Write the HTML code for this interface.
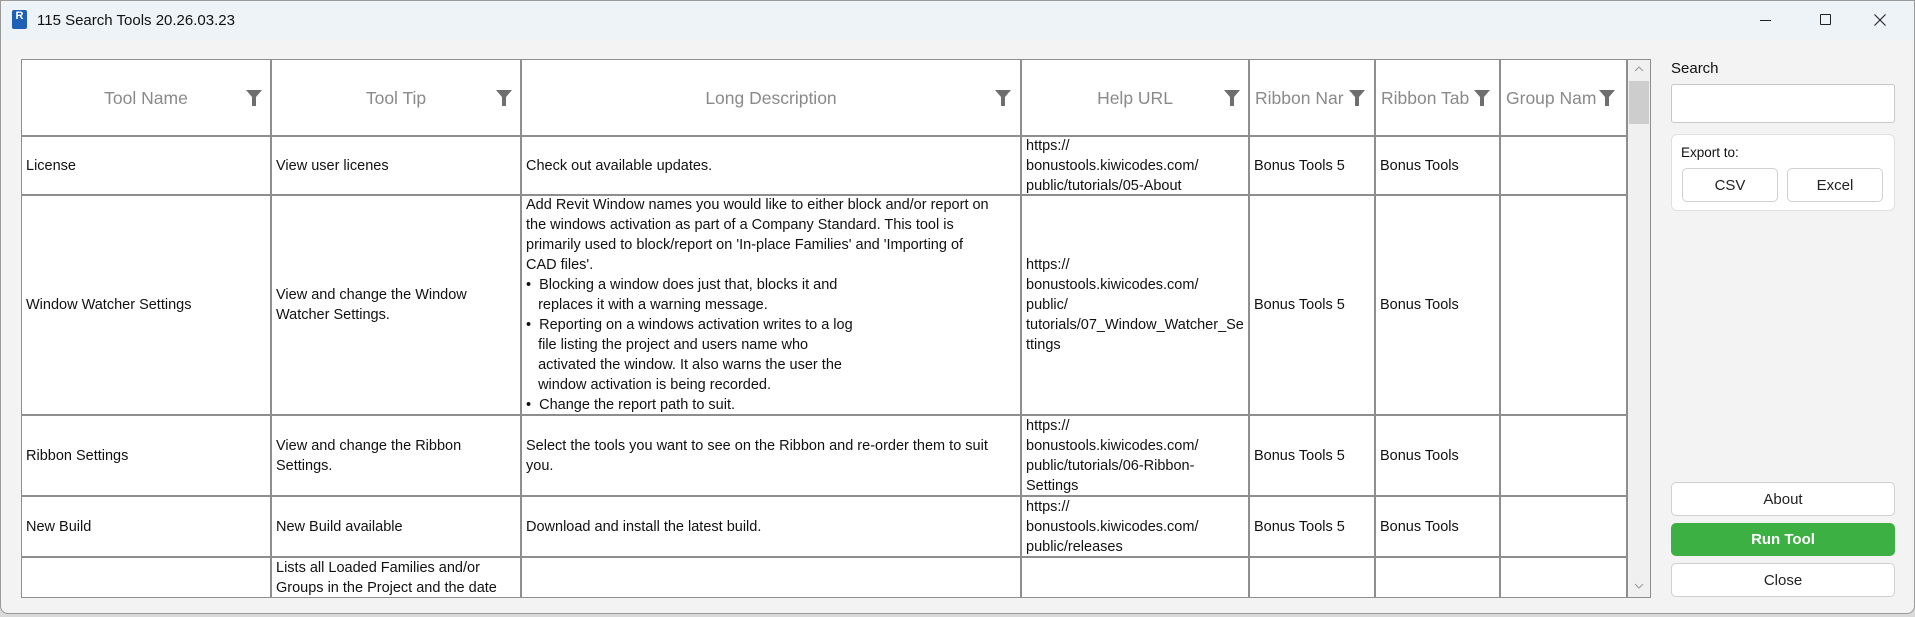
<!DOCTYPE html>
<html><head><meta charset="utf-8"><style>
*{box-sizing:border-box;margin:0;padding:0}
body{width:1915px;height:617px;overflow:hidden;background:#d9d9d9;font-family:"Liberation Sans",sans-serif;position:relative}
.win{position:absolute;left:0;top:0;width:1915px;height:614px;background:#f3f3f3;border:1px solid #9a9a9a;border-radius:0 0 8px 8px}
.title{position:absolute;left:0;top:0;width:100%;height:39px;background:#eef3f8}
.t{position:absolute;font-size:14.5px;color:#111;line-height:20px;white-space:nowrap}
.c{position:absolute;background:#fff;border-right:2px solid #8e8e8e;border-bottom:2px solid #8e8e8e;display:flex;align-items:center;padding-left:4px;font-size:14.5px;line-height:20px;color:#111;white-space:nowrap;overflow:hidden}
.h{justify-content:center;color:#8a8a8a;font-size:17.5px;padding-left:0}
.f{position:absolute;width:18px;height:18px}
.btn{position:absolute;background:#fff;border:1px solid #d0d0d0;border-radius:5px;display:flex;align-items:center;justify-content:center;font-size:15px;color:#222}
</style></head><body>
<div class="win">
<div class="title">
 <div style="position:absolute;left:11px;top:9px;width:15px;height:19px;background:#1f5fb5;border-radius:2px;color:#fff;font-size:11px;font-weight:bold;text-align:center;line-height:13px">R</div>
 <div class="t" style="left:36px;top:10px;font-size:15px">115 Search Tools 20.26.03.23</div>
 <div style="position:absolute;left:1759px;top:19px;width:11px;height:1px;background:#222"></div>
 <div style="position:absolute;left:1819px;top:13px;width:11px;height:11px;border:1px solid #222;border-radius:1px"></div>
 <svg style="position:absolute;left:1873px;top:13px" width="12" height="12" viewBox="0 0 12 12"><path d="M0.5 0.5L11.5 11.5M11.5 0.5L0.5 11.5" stroke="#222" stroke-width="1.1"/></svg>
</div>
<div style="position:absolute;left:20px;top:58px;width:1630px;height:539px;border:1px solid #8e8e8e;background:#fff"></div>
<div id="tbl"></div>
<div style="position:absolute;left:1627px;top:59px;width:22px;height:537px;background:#f0f0f0"></div>
<div style="position:absolute;left:1628px;top:80px;width:20px;height:43px;background:#cdcdcd"></div>
<svg style="position:absolute;left:1633px;top:65px" width="10" height="6" viewBox="0 0 10 6"><path d="M1 5L5 1L9 5" stroke="#999" fill="none"/></svg>
<svg style="position:absolute;left:1633px;top:582px" width="10" height="6" viewBox="0 0 10 6"><path d="M1 1L5 5L9 1" stroke="#999" fill="none"/></svg>

<div class="t" style="left:1670px;top:58px;font-size:15px">Search</div>
<div style="position:absolute;left:1670px;top:83px;width:224px;height:39px;background:#fff;border:1px solid #c8c8c8;border-radius:3px"></div>
<div style="position:absolute;left:1670px;top:133px;width:224px;height:77px;background:#fff;border:1px solid #e0e0e0;border-radius:6px"></div>
<div class="t" style="left:1680px;top:142px;font-size:13.5px">Export to:</div>
<div class="btn" style="left:1681px;top:167px;width:96px;height:34px">CSV</div>
<div class="btn" style="left:1786px;top:167px;width:96px;height:34px">Excel</div>
<div class="btn" style="left:1670px;top:481px;width:224px;height:34px">About</div>
<div class="btn" style="left:1670px;top:522px;width:224px;height:33px;background:#3cb043;border-color:#3cb043;color:#fff;font-weight:bold">Run Tool</div>
<div class="btn" style="left:1670px;top:562px;width:224px;height:34px">Close</div>
</div>
<script>
var X=[21,271,521,1021,1249,1375,1500,1627];
var Y=[59,136,195,415,496,557,596];
var H=["Tool Name","Tool Tip","Long Description","Help URL","Ribbon Nar","Ribbon Tab","Group Nam"];
var R=[
["License","View user licenes","Check out available updates.","https://<br>bonustools.kiwicodes.com/<br>public/tutorials/05-About","Bonus Tools 5","Bonus Tools",""],
["Window Watcher Settings","View and change the Window<br>Watcher Settings.","Add Revit Window names you would like to either block and/or report on<br>the windows activation as part of a Company Standard. This tool is<br>primarily used to block/report on 'In-place Families' and 'Importing of<br>CAD files'.<br>•&nbsp; Blocking a window does just that, blocks it and<br>&nbsp;&nbsp;&nbsp;replaces it with a warning message.<br>•&nbsp; Reporting on a windows activation writes to a log<br>&nbsp;&nbsp;&nbsp;file listing the project and users name who<br>&nbsp;&nbsp;&nbsp;activated the window. It also warns the user the<br>&nbsp;&nbsp;&nbsp;window activation is being recorded.<br>•&nbsp; Change the report path to suit.","https://<br>bonustools.kiwicodes.com/<br>public/<br>tutorials/07_Window_Watcher_Se<br>ttings","Bonus Tools 5","Bonus Tools",""],
["Ribbon Settings","View and change the Ribbon<br>Settings.","Select the tools you want to see on the Ribbon and re-order them to suit<br>you.","https://<br>bonustools.kiwicodes.com/<br>public/tutorials/06-Ribbon-<br>Settings","Bonus Tools 5","Bonus Tools",""],
["New Build","New Build available","Download and install the latest build.","https://<br>bonustools.kiwicodes.com/<br>public/releases","Bonus Tools 5","Bonus Tools",""],
["","Lists all Loaded Families and/or<br>Groups in the Project and the date","","","","",""]];
var s="";
var fx=[244,494,993,1222,1347,1472,1597];
for(var i=0;i<7;i++){
 var pad=i>=4?"justify-content:flex-start;padding-left:5px;":"";
 s+='<div class="c h" style="left:'+X[i]+'px;top:'+Y[0]+'px;width:'+(X[i+1]-X[i])+'px;height:'+(Y[1]-Y[0])+'px;'+pad+'">'+H[i]+'</div>';
 s+='<svg class="f" style="left:'+fx[i]+'px;top:88px" viewBox="0 0 18 18"><path d="M1 1h16l-6 7v9h-4v-9z" fill="#6e6e6e"/></svg>';
}
for(var r=0;r<5;r++)for(var i=0;i<7;i++){
 var last=r==4;
 s+='<div class="c" style="left:'+X[i]+'px;top:'+Y[r+1]+'px;width:'+(X[i+1]-X[i])+'px;height:'+(Y[r+2]-Y[r+1])+'px;'+(last?'align-items:flex-start;border-bottom:none;':'')+'"><div>'+R[r][i]+'</div></div>';
}
document.getElementById('tbl').innerHTML=s;
</script>
</body></html>
